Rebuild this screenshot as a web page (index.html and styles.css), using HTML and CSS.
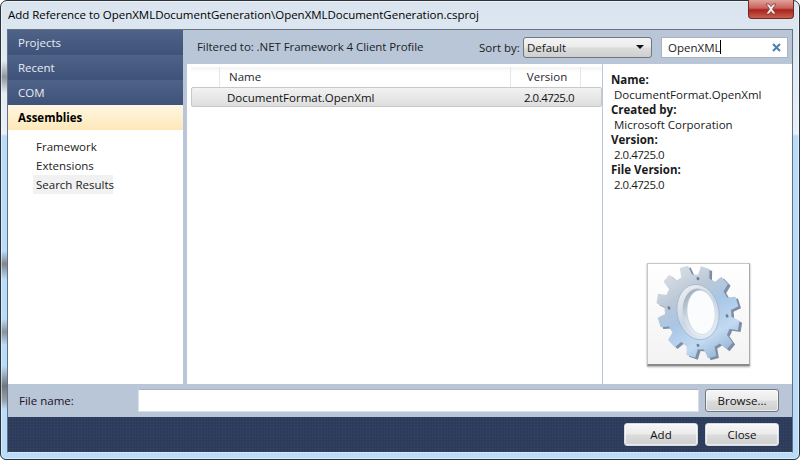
FILE: index.html

```html
<!doctype html>
<html lang="en">
<head>
  <meta charset="UTF-8">
  <title>Add Reference</title>
  <link rel="stylesheet" href="styles.css">
</head>
<body>
<div class="window">
  <div class="titlebar">
    <span class="title">Add Reference to OpenXMLDocumentGeneration\OpenXMLDocumentGeneration.csproj</span>
    <div class="closebtn">
      <svg width="18" height="12" viewBox="0 0 18 12">
        <path d="M4 1h3l2 2.5L11 1h3l-3.5 5L14 11h-3L9 8.500 7 11H4l3.500-5z" fill="#f4eeec" stroke="#7c3a34" stroke-width="0.8"/>
      </svg>
    </div>
  </div>

  <div class="client">
    <div class="top">
      <nav class="sidebar">
        <div class="tab">Projects</div>
        <div class="tab">Recent</div>
        <div class="tab">COM</div>
        <div class="tab tab-active">Assemblies</div>
        <ul class="subnav">
          <li>Framework</li>
          <li>Extensions</li>
          <li class="subnav-on">Search Results</li>
        </ul>
      </nav>

      <div class="pane">
        <div class="filterbar">
          <span class="filtered">Filtered to: .NET Framework 4 Client Profile</span>
          <span class="sortlabel">Sort by:</span>
          <div class="select">
            <span>Default</span>
            <i class="arrow"></i>
          </div>
          <div class="search">
            <span class="query">OpenXML</span><i class="caret"></i>
            <svg class="clear" width="9" height="9" viewBox="0 0 9 9">
              <path d="M1 1l7 7M8 1L1 8" stroke="#4a7fae" stroke-width="2"/>
            </svg>
          </div>
        </div>

        <div class="panebody">
          <div class="list">
            <div class="listhead">
              <div class="col col-blank"></div>
              <div class="col col-name">Name</div>
              <div class="col col-version">Version</div>
              <div class="col col-rest"></div>
            </div>
            <div class="row">
              <span class="cell-name">DocumentFormat.OpenXml</span>
              <span class="cell-version num">2.0.4725.0</span>
            </div>
          </div>

          <aside class="details">
            <div class="info">
              <b>Name:</b>
              <p>DocumentFormat.OpenXml</p>
              <b>Created by:</b>
              <p>Microsoft Corporation</p>
              <b>Version:</b>
              <p class="num">2.0.4725.0</p>
              <b>File Version:</b>
              <p class="num">2.0.4725.0</p>
            </div>
            <div class="tile">
              <svg width="100" height="100" viewBox="0 0 100 100">
                <defs>
                  <linearGradient id="face" gradientUnits="userSpaceOnUse" x1="-30" y1="-45" x2="30" y2="45">
                    <stop offset="0" stop-color="#dfe3e8"/>
                    <stop offset="0.3" stop-color="#bcc8d6"/>
                    <stop offset="0.5" stop-color="#a8c6e6"/>
                    <stop offset="0.75" stop-color="#c2daf2"/>
                    <stop offset="1" stop-color="#8fadd0"/>
                  </linearGradient>
                  <linearGradient id="ring" gradientUnits="userSpaceOnUse" x1="-20" y1="-25" x2="20" y2="25">
                    <stop offset="0" stop-color="#eef1f4"/>
                    <stop offset="0.5" stop-color="#c9d6e4"/>
                    <stop offset="1" stop-color="#e9f1f9"/>
                  </linearGradient>
                  <linearGradient id="hole" gradientUnits="userSpaceOnUse" x1="-20" y1="-20" x2="20" y2="20">
                    <stop offset="0" stop-color="#8d9cad"/>
                    <stop offset="0.45" stop-color="#d3dde7"/>
                    <stop offset="1" stop-color="#f4f8fb"/>
                  </linearGradient>
                  <polygon id="tooth" points="-7,-34 -5,-47 5,-47 7,-34"/>
                  <clipPath id="gearclip">
                    <circle cx="0" cy="0" r="38"/>
                    <use href="#tooth" transform="rotate(10)"/>
                    <use href="#tooth" transform="rotate(40)"/>
                    <use href="#tooth" transform="rotate(70)"/>
                    <use href="#tooth" transform="rotate(100)"/>
                    <use href="#tooth" transform="rotate(130)"/>
                    <use href="#tooth" transform="rotate(160)"/>
                    <use href="#tooth" transform="rotate(190)"/>
                    <use href="#tooth" transform="rotate(220)"/>
                    <use href="#tooth" transform="rotate(250)"/>
                    <use href="#tooth" transform="rotate(280)"/>
                    <use href="#tooth" transform="rotate(310)"/>
                    <use href="#tooth" transform="rotate(340)"/>
                  </clipPath>
                  <filter id="soft"><feGaussianBlur stdDeviation="0.6"/></filter>
                </defs>
                <g filter="url(#soft)">
                  <g transform="matrix(0.88 0.12 0 0.98 50 48)">
                    <rect x="-50" y="-50" width="100" height="100" fill="#7d8ea5" clip-path="url(#gearclip)" transform="translate(3 1.500)"/>
                    <rect x="-50" y="-50" width="100" height="100" fill="url(#face)" clip-path="url(#gearclip)"/>
                    <ellipse cx="0" cy="0" rx="24" ry="28" fill="url(#ring)" stroke="#9db0c6" stroke-width="0.800"/>
                    <ellipse cx="1.500" cy="0" rx="19" ry="24" fill="url(#hole)"/>
                    <ellipse cx="3.500" cy="0" rx="16" ry="22.500" fill="#fbfcfd" stroke="#b3bfcc" stroke-width="0.500"/>
                    <circle cx="0" cy="-34" r="1.700" fill="#6f8197"/>
                    <circle cx="33" cy="0" r="1.700" fill="#6f8197"/>
                    <circle cx="0" cy="34" r="1.700" fill="#6f8197"/>
                    <circle cx="-33" cy="0" r="1.700" fill="#6f8197"/>
                  </g>
                </g>
              </svg>
            </div>
          </aside>
        </div>
      </div>
    </div>

    <div class="filerow">
      <label class="filelabel">File name:</label>
      <div class="fileinput"></div>
      <button class="btn btn-browse">Browse...</button>
    </div>

    <div class="footer">
      <button class="btn btn-foot">Add</button>
      <button class="btn btn-foot">Close</button>
    </div>
  </div>
</div>
</body>
</html>
```

FILE: styles.css

```css
* {
  box-sizing: border-box;
}
html, body {
  margin: 0;
  padding: 0;
  width: 800px;
  height: 460px;
  overflow: hidden;
  background: #fff;
}
body {
  font-family: "Open Sans", "Noto Sans", "Liberation Sans", sans-serif;
  font-size: 11.5px;
  color: #1a1a1a;
}

/* outer aero frame, the grey streaks on the left are the desktop behind the glass */
.window {
  width: 800px;
  height: 460px;
  display: flex;
  flex-direction: column;
  padding: 0 6px 6px 6px;
  border: 1px solid #2b3238;
  border-radius: 7px 7px 6px 6px;
  box-shadow: inset 0 0 0 1px rgba(255, 255, 255, 0.5);
  background-color: #b9dcfa;
  background-image:
    linear-gradient(to bottom,
      transparent 60px, #8f959b 76px, transparent 92px,
      transparent 250px, #7f868e 263px, transparent 278px,
      transparent 318px, #8a9199 331px, transparent 344px,
      transparent 365px, #6f767e 385px, #9aa3ad 400px, transparent 408px),
    linear-gradient(to bottom, #d9e4ee 0, #e8f1fa 133px, #b9dcfa 135px);
  background-size: 6px 100%, 100% 100%;
  background-repeat: no-repeat;
}
.titlebar {
  height: 28px;
  flex: none;
  display: flex;
  justify-content: space-between;
  align-items: flex-start;
}
.title {
  padding: 6px 0 0 1px;
  line-height: 16px;
  color: #000;
  letter-spacing: -0.03px;
}
.closebtn {
  width: 46px;
  height: 19px;
  margin-right: -1px;
  margin-top: -1px;
  border: 1px solid #6f2a26;
  border-top: 0;
  border-radius: 0 0 4px 4px;
  background: linear-gradient(to bottom, #e0a49c 0, #c9605a 45%, #a9231c 55%, #c8604e 100%);
  display: flex;
  justify-content: center;
  align-items: center;
}

.client {
  flex: 1;
  display: flex;
  flex-direction: column;
  border: 1px solid #66707e;
  border-bottom-color: #dfe6ee;
  background: #b9c6d8;
  min-height: 0;
}
.top {
  flex: 1;
  display: flex;
  min-height: 0;
}

/* left side */
.sidebar {
  width: 175px;
  flex: none;
  background: #fff;
}
.tab {
  height: 25px;
  padding-left: 10px;
  line-height: 25px;
  color: #e8ecf2;
  background: linear-gradient(to bottom, #4f6389 0, #3f5279 100%);
}
.tab-active {
  color: #000;
  font-weight: 700;
  background: linear-gradient(to bottom, #fff6e2 0, #fee8b9 100%);
}
.subnav {
  list-style: none;
  margin: 7px 0 0 25px;
  padding: 0;
}
.subnav li {
  height: 19px;
  line-height: 19px;
  width: 80px;
  padding-left: 3px;
  color: #222;
  white-space: nowrap;
}
.subnav-on {
  background: #f1f1f1;
}

/* right side */
.pane {
  flex: 1;
  display: flex;
  flex-direction: column;
  margin-left: 4px;
  min-width: 0;
}
.filterbar {
  height: 34px;
  flex: none;
  display: flex;
  align-items: center;
  padding-left: 10px;
}
.filtered {
  width: 282px;
  color: #1b1f28;
  margin-top: -1px;
  letter-spacing: -0.07px;
}
.sortlabel {
  width: 44px;
}
.select {
  width: 129px;
  height: 21px;
  border: 1px solid #6f7780;
  border-radius: 3px;
  background: linear-gradient(to bottom, #f4f4f4 0, #ebebeb 48%, #dcdcdc 52%, #cfcfcf 100%);
  display: flex;
  justify-content: space-between;
  align-items: center;
  padding: 0 7px 0 3px;
}
.arrow {
  width: 0;
  height: 0;
  border-left: 4px solid transparent;
  border-right: 4px solid transparent;
  border-top: 4px solid #111;
}
.search {
  width: 127px;
  height: 21px;
  margin-left: 9px;
  background: #fff;
  border: 1px solid #a9b4c2;
  display: flex;
  align-items: center;
  padding-left: 6px;
}
.caret {
  width: 1px;
  height: 14px;
  background: #000;
}
.clear {
  margin-left: auto;
  margin-right: 6px;
}
.panebody {
  flex: 1;
  display: flex;
  min-height: 0;
}
.list {
  width: 416px;
  flex: none;
  background: #fff;
  padding: 3px 0 0 4px;
  border-right: 1px solid #b9c6d8;
}
.listhead {
  height: 20px;
  display: flex;
  background: linear-gradient(to bottom, #f4f4f5, #fff 30%);
}
.col {
  line-height: 20px;
  border-right: 1px solid #e4e6ea;
  text-align: center;
  color: #1f2530;
}
.col-blank {
  width: 29px;
}
.col-name {
  width: 291px;
  text-align: left;
  padding-left: 9px;
}
.col-version {
  width: 70px;
  padding-left: 3px;
}
.col-rest {
  flex: 1;
  border-right: 0;
}
.row {
  height: 20px;
  display: flex;
  align-items: center;
  border: 1px solid #c8c8c8;
  border-radius: 2px;
  background: linear-gradient(to bottom, #f2f2f2 0, #dedede 100%);
  color: #111;
}
.cell-name {
  width: 319px;
  padding-left: 35px;
}
.cell-version {
  width: 76px;
  text-align: center;
}
.num {
  letter-spacing: -0.5px;
}
.details {
  flex: 1;
  background: #fff;
  padding: 8px 0 18px 8px;
  display: flex;
  flex-direction: column;
}
.info {
  line-height: 15px;
}
.info b {
  display: block;
}
.info p {
  margin: 0 0 0 3px;
}
.tile {
  width: 103px;
  height: 103px;
  margin: auto 0 0 36px;
  background: linear-gradient(to bottom, #fff, #f3f3f3);
  border: 1px solid #c6c6c6;
  border-bottom: 2px solid #8a8a8a;
  border-right-color: #aaa;
  box-shadow: 0 1px 2px rgba(0, 0, 0, 0.35);
}

/* bottom rows */
.filerow {
  height: 33px;
  flex: none;
  display: flex;
  align-items: center;
  padding-left: 11px;
}
.filelabel {
  width: 119px;
  color: #1a1020;
}
.fileinput {
  width: 561px;
  height: 23px;
  background: #fff;
  border: 1px solid #d9dfe7;
  border-top-color: #a9b2bf;
}
.btn {
  width: 74px;
  height: 23px;
  padding: 0;
  font: inherit;
  color: #111;
  border: 1px solid #6f7780;
  border-radius: 3px;
  background: linear-gradient(to bottom, #f6f6f6 0, #ebebeb 48%, #dcdcdc 52%, #cfcfcf 100%);
  box-shadow: inset 0 0 0 1px rgba(255, 255, 255, 0.6);
}
.btn-browse {
  margin-left: 6px;
}
.footer {
  height: 35px;
  flex: none;
  display: flex;
  justify-content: flex-end;
  align-items: center;
  gap: 7px;
  padding-right: 13px;
  background-color: #2c3c5a;
  background-image: radial-gradient(circle, #35476a 0.8px, transparent 1px);
  background-size: 3px 3px;
}
.btn-foot {
  border-color: #d6dbe2;
}
```
